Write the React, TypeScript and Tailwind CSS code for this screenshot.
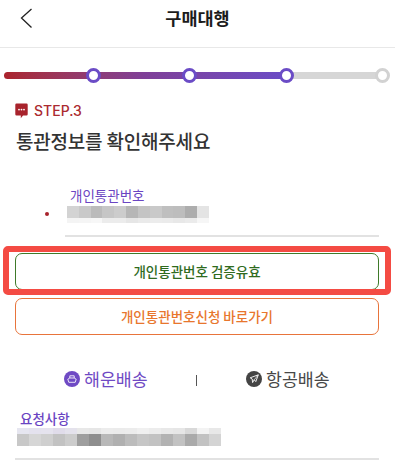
const font = { fontFamily: '"Noto Sans CJK KR", "Noto Sans", sans-serif' };

const idRows = [
  { h: "h-[12px]", cells: ["#d3d3d3", "#c9c9c9", "#bbbbbb", "#c6c6c6", "#cccccc", "#b6b6b6", "#c4c4c4", "#c9c9c9", "#bfbfbf", "#bdbdbd", "#adadad", "#e4e4e4"] },
  { h: "h-[5px]", cells: ["#f4f4f4", "#f5f5f5", "#f7f7f7", "#ececec", "#ececec", "#e6e6e6", "#eaeaea", "#ececec", "#ebebeb", "#e8e8e8", "#ebebeb", "#f6f6f6"] },
];

const requestRows = [
  { h: "h-[6px]", cells: ["#e6e6f0", "#e4e2ee", "#e5e3ee", "#e0dcea", "#e4e2ec", "#e8e8e8", "#e6e6e6", "#ececec", "#ebebeb", "#ececec", "#f0f0f0", "#ececec", "#e8e8e8", "#e6e6e6", "#d9d9d9", "#f3f3f3", "#e8e8e8"] },
  { h: "h-[12px]", cells: ["#c8c8c8", "#d6d6d6", "#cfcfcf", "#c2c2c2", "#cccccc", "#9e9e9e", "#8e8e8e", "#b8b8b8", "#b0b0b0", "#bcbcbc", "#c6c6c6", "#c2c2c2", "#b2b2b2", "#c2c2c2", "#aaaaaa", "#c2c2c2", "#d4d4d4"] },
];

const Mosaic = ({ rows, width }: { rows: { h: string; cells: string[] }[]; width: string }) => (
  <div className={`flex flex-col ${width}`}>
    {rows.map((row, i) => (
      <div key={i} className={`flex ${row.h}`}>
        {row.cells.map((c, j) => (
          <div key={j} className="flex-1 h-full" style={{ backgroundColor: c }} />
        ))}
      </div>
    ))}
  </div>
);

const Dot = ({ left, color }: { left: string; color: string }) => (
  <div className={`absolute top-[-4px] w-[15px] h-[15px] rounded-full bg-white border-[3px] ${left} ${color}`} />
);

const App = () => {
  return (
    <div className="w-[404px] h-[475px] bg-white overflow-hidden" style={font}>
      <div className="w-[395px]">
        {/* header */}
        <div className="relative flex items-center justify-center h-[47px] border-b border-[#e8e8e8] box-content">
          <svg className="absolute left-[20px] top-[8px]" width="13" height="21" viewBox="0 0 13 21" fill="none">
            <path d="M11.5 1 L1.5 10 L11.5 19.5" stroke="#222" strokeWidth="1.3" />
          </svg>
          <h1 className="text-[17.5px] font-bold text-[#1c1c1c] leading-none mb-[11px]">구매대행</h1>
        </div>

        {/* progress */}
        <div className="relative mt-[24px] ml-[4px] flex h-[7px] w-[379px]">
          <div className="w-[282px] h-full rounded-l-full bg-gradient-to-r from-[#ab232c] via-[#7f3f98] to-[#6b4cc6]" />
          <div className="flex-1 h-full bg-[#d6d6d6]" />
          <Dot left="left-[82px]" color="border-[#6b4cc6]" />
          <Dot left="left-[178px]" color="border-[#6b4cc6]" />
          <Dot left="left-[275px]" color="border-[#6b4cc6]" />
          <Dot left="left-[371px]" color="border-[#d2d2d2]" />
        </div>

        {/* step */}
        <div className="mt-[24px] ml-[15px] flex items-center gap-[6px] h-[16px]">
          <svg width="13" height="16" viewBox="0 0 13 16">
            <path d="M1.5 0.5 H11.5 A1.2 1.2 0 0 1 12.7 1.7 V11.3 A1.2 1.2 0 0 1 11.5 12.5 H8 L5.8 15.2 V12.5 H1.5 A1.2 1.2 0 0 1 0.3 11.3 V1.7 A1.2 1.2 0 0 1 1.5 0.5 Z" fill="#a8232c" />
            <circle cx="4" cy="6.6" r="0.9" fill="#fff" />
            <circle cx="6.5" cy="6.6" r="0.9" fill="#fff" />
            <circle cx="9" cy="6.6" r="0.9" fill="#fff" />
          </svg>
          <span className="text-[14px] font-medium text-[#ab2a30] leading-none font-['Inter']">STEP.3</span>
        </div>
        <h2 className="mt-[8px] ml-[16px] text-[19px] leading-[28px] font-medium text-[#333333] tracking-[-0.2px]">통관정보를 확인해주세요</h2>

        {/* customs number */}
        <div className="relative mt-[31px] ml-[65px] w-[314px] border-b-2 border-[#e2e2e2] h-[51px]">
          <div className="absolute left-[-20px] top-[26px] w-[4px] h-[4px] rounded-full bg-[#a8232c]" />
          <p className="ml-[5px] text-[13.5px] leading-[18px] text-[#6a45c2]">개인통관번호</p>
          <div className="ml-[2px] mt-[2px]">
            <Mosaic rows={idRows} width="w-[142px]" />
          </div>
        </div>

        {/* buttons */}
        <div className="relative mt-[16px] mx-[15px] w-[364px] flex flex-col gap-[8px]">
          <div className="h-[37px] rounded-[7px] border border-[#3f7a2a] flex items-center justify-center text-[13.5px] font-medium text-[#2f6b1e]">
            개인통관번호 검증유효
          </div>
          <div className="h-[37px] rounded-[7px] border border-[#e8743b] flex items-center justify-center text-[13.5px] font-medium text-[#e8762d]">
            개인통관번호신청 바로가기
          </div>
          <div className="absolute left-[-12px] top-[-7px] w-[388px] h-[49px] rounded-[5px] border-[6px] border-[#f44b43]" />
        </div>

        {/* shipping */}
        <div className="mt-[32px] relative h-[24px] flex items-center">
          <div className="absolute left-[64px] flex items-center gap-[4px]">
            <svg width="16" height="16" viewBox="0 0 16 16" fill="none">
              <circle cx="8" cy="8" r="8" fill="#6f4ac4" />
              <path d="M5.8 7 V4.8 H10.2 V7" stroke="#fff" strokeOpacity="0.85" strokeWidth="1" />
              <path d="M3.8 8.2 L5.8 7 H10.2 L12.2 8.2 L11.2 11.3 H4.8 Z" stroke="#fff" strokeOpacity="0.85" strokeWidth="1" />
            </svg>
            <span className="text-[17.3px] leading-none text-[#6f4ac4]">해운배송</span>
          </div>
          <div className="absolute left-[196px] top-[8px] w-px h-[11px] bg-[#555555]" />
          <div className="absolute left-[246px] flex items-center gap-[4px]">
            <svg width="16" height="16" viewBox="0 0 16 16" fill="none">
              <circle cx="8" cy="8" r="8" fill="#444444" />
              <path d="M12.3 3.8 L9.8 10.6 L8.2 8.8 L6.6 11.6 L6.2 8 L4.2 6.8 Z" stroke="#fff" strokeWidth="0.9" strokeLinejoin="round" />
              <path d="M12.3 3.8 L8.2 8.8" stroke="#fff" strokeWidth="0.7" />
            </svg>
            <span className="text-[17.3px] leading-none text-[#484848]">항공배송</span>
          </div>
        </div>

        {/* request */}
        <div className="mt-[19px] ml-[15px] w-[364px] h-[50px] border-b-2 border-[#e2e2e2]">
          <p className="ml-[5px] mb-[1px] text-[13.5px] leading-[17px] font-medium text-[#6a45c2]">요청사항</p>
          <div className="ml-[2px]">
            <Mosaic rows={requestRows} width="w-[204px]" />
          </div>
        </div>
      </div>
    </div>
  );
};

export default App;
